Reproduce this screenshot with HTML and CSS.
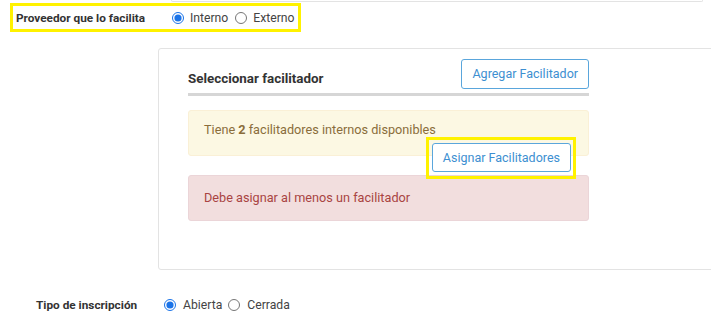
FILE: index.html
```
<!DOCTYPE html>
<html lang="es">
<head>
  <meta charset="UTF-8">
  <title>Facilitadores</title>
  <link rel="stylesheet" href="styles.css">
</head>
<body>

  <!-- bottom edge of the previous panel -->
  <div class="prev-edge"></div>

  <!-- Proveedor -->
  <div class="mark mark-provider">
    <span class="field-label label-provider">Proveedor que lo facilita</span>
    <label class="radio"><input type="radio" name="proveedor" checked> Interno</label>
    <label class="radio"><input type="radio" name="proveedor"> Externo</label>
  </div>

  <!-- Facilitadores panel -->
  <div class="panel">
    <div class="panel-head">
      <span class="panel-title">Seleccionar facilitador</span>
      <button class="btn">Agregar Facilitador</button>
    </div>

    <div class="alert alert-warning">
      <p>Tiene <strong>2</strong> facilitadores internos disponibles</p>
      <span class="mark mark-button">
        <button class="btn">Asignar Facilitadores</button>
      </span>
    </div>

    <div class="alert alert-danger">
      <p>Debe asignar al menos un facilitador</p>
    </div>
  </div>

  <!-- Tipo de inscripcion -->
  <div class="form-row">
    <span class="field-label label-tipo">Tipo de inscripción</span>
    <label class="radio"><input type="radio" name="tipo" checked> Abierta</label>
    <label class="radio"><input type="radio" name="tipo"> Cerrada</label>
  </div>

</body>
</html>
```

FILE: styles.css
```
html {
  overflow: hidden;
}
body {
  margin: 0;
  font-family: Roboto, "Liberation Sans", Arial, sans-serif;
  font-size: 12.7px;
  line-height: 18px;
  color: #333;
  background: #fff;
}
.prev-edge {
  margin-left: 171px;
  width: 530px;
  height: 1px;
  border: 1px solid #e3e3e3;
  border-top: none;
  border-radius: 0 0 3px 3px;
}
.mark {
  border: 3px solid #fff200;
}
.mark-provider {
  display: flex;
  align-items: center;
  width: max-content;
  height: 23px;
  margin-left: 10px;
  margin-top: 1px;
  padding: 0 3px 0 3px;
}
.mark-provider .radio:last-child {
  margin-right: 0;
}
.field-label {
  flex-shrink: 0;
  font-size: 11.8px;
  font-weight: bold;
  color: #333;
}
.label-provider {
  width: 156px;
}
.radio {
  display: inline-flex;
  align-items: center;
  font-size: 12.2px;
  color: #444;
  margin-right: 7px;
}
.radio input {
  width: 12px;
  height: 12px;
  margin: 0 6px 0 0;
  accent-color: #1a73e8;
}
.panel {
  margin-left: 158px;
  margin-top: 16px;
  width: 600px;
  height: 222px;
  box-sizing: border-box;
  border: 1px solid #e3e3e3;
  border-radius: 3px;
  padding: 10px 30px 0 29px;
}
.panel-head {
  width: 401px;
  display: flex;
  justify-content: space-between;
  align-items: flex-end;
  padding-bottom: 4px;
  border-bottom: 3px solid #d6d6d6;
}
.panel-title {
  font-size: 13.4px;
  font-weight: bold;
  padding-bottom: 1px;
}
.btn {
  font-family: inherit;
  font-size: 12.5px;
  line-height: 18px;
  color: #3d8fd1;
  background: #fff;
  border: 1px solid #5aa6dc;
  border-radius: 3px;
  padding: 5px 10px;
}
.alert {
  width: 401px;
  box-sizing: border-box;
  border: 1px solid transparent;
  border-radius: 3px;
  padding: 10px 15px 16px;
}
.alert p {
  margin: 0;
}
.alert-warning {
  margin-top: 14px;
  background: #fcf8e3;
  border-color: #faf0d6;
  color: #8a6d3b;
}
.alert-danger {
  margin-top: 19px;
  background: #f2dede;
  border-color: #ebd5d8;
  color: #a94442;
  padding-top: 13px;
  padding-bottom: 13px;
}
.mark-button {
  float: right;
  margin-top: -2px;
  margin-right: -3px;
  padding: 3px 2px 4px 3px;
}
.mark-button .btn {
  display: block;
  padding: 5px 10px 4px;
}
.form-row {
  display: flex;
  align-items: center;
  margin-top: 26px;
  padding-left: 36px;
}
.label-tipo {
  width: 128px;
}
.form-row .radio {
  margin-right: 6px;
}
.form-row .radio input {
  margin-right: 7px;
}
```
